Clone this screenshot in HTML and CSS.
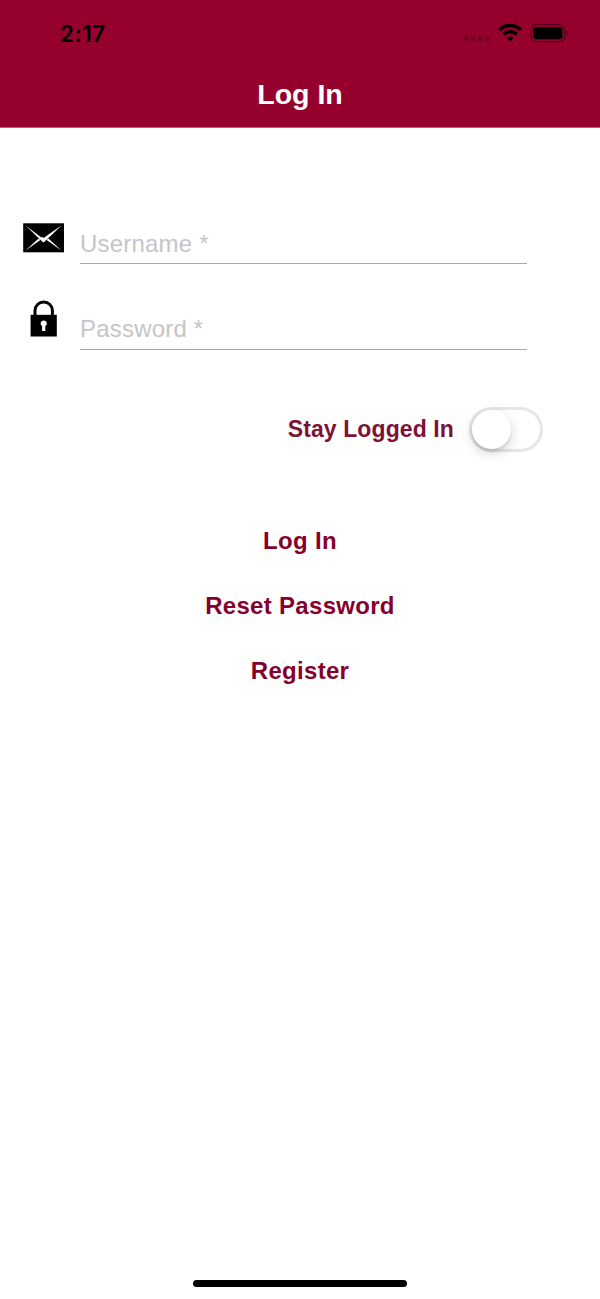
FILE: index.html
```html
<!DOCTYPE html>
<html lang="en">
<head>
  <meta charset="UTF-8" />
  <meta name="viewport" content="width=device-width, initial-scale=1" />
  <title>Log In</title>
  <link rel="stylesheet" href="styles.css">
</head>
<body>
  <header>
    <div class="status-bar">
      <span class="time">2:17</span>
      <svg class="status-icons" width="106" height="24" viewBox="0 0 106 24">
        <g fill="#000" opacity="0.24">
          <circle cx="4" cy="18.6" r="2.6" />
          <circle cx="11.2" cy="18.6" r="2.6" />
          <circle cx="18.4" cy="18.6" r="2.6" />
          <circle cx="25.6" cy="18.6" r="2.6" />
        </g>
        <g fill="none" stroke="#000" stroke-width="3.6">
          <path d="M37.6 9.8a15.2 15.2 0 0 1 21.2 0" />
          <path d="M41.7 14.4a9.3 9.3 0 0 1 13 0" />
        </g>
        <path d="M45 18a4.7 4.7 0 0 1 6.4 0L48.2 21.4z" />
        <rect x="69.2" y="4.6" width="33.4" height="17" rx="5" fill="none" stroke="#000" stroke-opacity="0.42" stroke-width="1.4" />
        <rect x="71.2" y="7" width="29.2" height="12.2" rx="3" />
        <path d="M104.4 10.2c2.3.8 2.3 5 0 5.8z" opacity="0.45" />
      </svg>
    </div>
    <h1>Log In</h1>
  </header>

  <form>
    <div class="field">
      <svg class="mail-icon" width="41" height="30" viewBox="0 0 41 30">
        <rect x="0.2" y="0.3" width="40.8" height="29" />
        <g fill="#fff">
          <path d="M2.2 2.2L18.4 14.4l1.2-.5 1.3 1.1 1.7-1.4L38.8 2.2 23.3 17l-2.8 2.5-2.8-2.5z" />
          <path d="M2.2 27.8L15.6 15.5l1.8 1.6z" />
          <path d="M38.8 27.8L25.4 15.5l-1.8 1.6z" />
        </g>
      </svg>
      <input type="text" placeholder="Username *">
    </div>
    <div class="field password">
      <svg class="lock-icon" width="27" height="37" viewBox="0 0 27 37">
        <path d="M5 16V10.6a8.7 8.7 0 0 1 17.4 0V16" fill="none" stroke="#000" stroke-width="3" />
        <rect x="0.6" y="14.8" width="26.2" height="21.7" />
        <path d="M13.7 20.5a3 3 0 0 1 1.6 5.6v4.9h-3.2v-4.9a3 3 0 0 1 1.6-5.6z" fill="#fff" />
      </svg>
      <input type="password" placeholder="Password *">
    </div>
    <label class="stay">
      Stay Logged In
      <span class="switch"><span class="knob"></span></span>
    </label>

    <div class="actions">
      <button type="button">Log In</button>
      <button type="button">Reset Password</button>
      <button type="button">Register</button>
    </div>
  </form>

  <div class="home-bar"></div>
</body>
</html>
```
FILE: styles.css
```css
* {
  box-sizing: border-box;
}

body {
  margin: 0;
  height: 1299px;
  display: flex;
  flex-direction: column;
  align-items: center;
  background: #fff;
  font-family: "Liberation Sans", Arial, sans-serif;
}

/* Top bar */
header {
  width: 100%;
  height: 128px;
  background: #96002d;
  border-bottom: 1px solid #a9667b;
}

.status-bar {
  display: flex;
  justify-content: space-between;
  align-items: center;
  height: 67px;
  padding: 0 30px 0 60px;
}

.time {
  font-family: Inter, sans-serif;
  font-size: 22.5px;
  font-weight: 600;
  letter-spacing: 0.5px;
}

.status-icons {
  margin: -3px 2px 0 0;
  overflow: visible;
}

h1 {
  margin: 0;
  color: #fff;
  font-size: 28.5px;
  line-height: 54px;
  text-align: center;
}

/* Form */
form {
  width: 100%;
  flex: 1;
  padding-top: 86px;
}

.field {
  display: flex;
  height: 50px;
  margin-bottom: 36px;
  padding: 0 73px 0 23px;
}

.field svg {
  flex-shrink: 0;
}

.mail-icon {
  margin: 9px 16px 0 0;
}

.lock-icon {
  margin: 0 23px 0 7px;
}

.field input {
  flex: 1;
  min-width: 0;
  height: 50px;
  padding: 10px 0 0;
  border: none;
  border-bottom: 1px solid #a8a8aa;
  border-radius: 0;
  outline: none;
  background: none;
  font-family: inherit;
  font-size: 24px;
  letter-spacing: 0.2px;
}

.password input {
  padding-top: 8px;
}

.field input::placeholder {
  color: #c5c5c9;
}

.stay {
  display: flex;
  justify-content: flex-end;
  align-items: center;
  gap: 15px;
  margin-top: 57px;
  padding-right: 57px;
  color: #7d1136;
  font-size: 23px;
  font-weight: bold;
  letter-spacing: 0.1px;
}

.switch {
  width: 74px;
  height: 45px;
  padding: 3px;
  border-radius: 23px;
  box-shadow: inset 0 0 0 3px #e6e6e6;
}

.knob {
  display: block;
  width: 39px;
  height: 39px;
  border-radius: 50%;
  background: #fff;
  box-shadow: 0 4px 12px rgba(0,0,0,0.18), 0 3px 2px rgba(0,0,0,0.08);
}

.actions {
  display: flex;
  flex-direction: column;
  align-items: center;
  margin-top: 56px;
}

button {
  height: 65px;
  padding: 0;
  border: none;
  background: none;
  color: #86002c;
  font-family: inherit;
  font-size: 24px;
  font-weight: bold;
  letter-spacing: 0.3px;
}

/* Home indicator */
.home-bar {
  width: 214px;
  height: 7px;
  margin-bottom: 12px;
  border-radius: 4px;
  background: #000;
}
```
